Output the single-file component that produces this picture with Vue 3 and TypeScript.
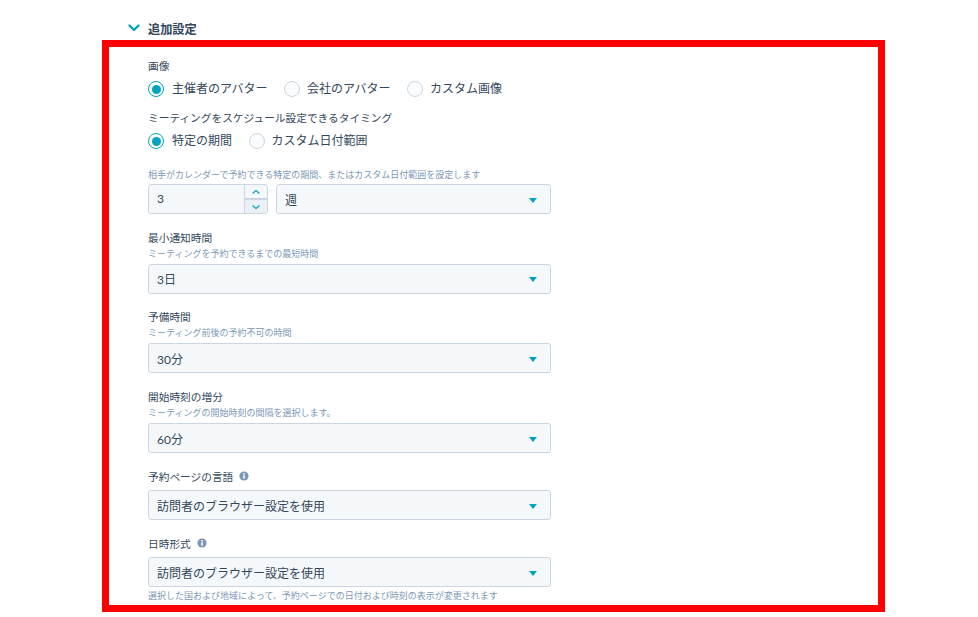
<script setup lang="ts">
interface Field {
  label: string
  hint?: string
  value: string
  info?: boolean
  after?: string
}

const avatarOptions = ['主催者のアバター', '会社のアバター', 'カスタム画像']
const timingOptions = ['特定の期間', 'カスタム日付範囲']

const fields: Field[] = [
  { label: '最小通知時間', hint: 'ミーティングを予約できるまでの最短時間', value: '3日' },
  { label: '予備時間', hint: 'ミーティング前後の予約不可の時間', value: '30分' },
  { label: '開始時刻の増分', hint: 'ミーティングの開始時刻の間隔を選択します。', value: '60分' },
  { label: '予約ページの言語', value: '訪問者のブラウザー設定を使用', info: true },
  {
    label: '日時形式',
    value: '訪問者のブラウザー設定を使用',
    info: true,
    after: '選択した国および地域によって、予約ページでの日付および時刻の表示が変更されます'
  }
]
</script>

<template>
  <main class="page">
    <header class="section-head">
      <svg class="chevron" width="12" height="8" viewBox="0 0 12 8" aria-hidden="true">
        <path d="M1.5 1.5 6 5.8l4.5-4.3" fill="none" stroke="#00a4bd" stroke-width="2.4" stroke-linecap="round" stroke-linejoin="round" />
      </svg>
      <h2>追加設定</h2>
    </header>

    <section class="frame">
      <div class="label first">画像</div>
      <div class="radios">
        <label v-for="(o, i) in avatarOptions" :key="o" class="radio">
          <span class="dot" :class="{ on: i === 0 }"></span>{{ o }}
        </label>
      </div>

      <div class="label second">ミーティングをスケジュール設定できるタイミング</div>
      <div class="radios">
        <label v-for="(o, i) in timingOptions" :key="o" class="radio">
          <span class="dot" :class="{ on: i === 0 }"></span>{{ o }}
        </label>
      </div>

      <div class="hint range-hint">相手がカレンダーで予約できる特定の期間、またはカスタム日付範囲を設定します</div>
      <div class="range">
        <div class="stepper">
          <span class="num">3</span>
          <div class="steps">
            <span class="step">
              <svg width="10" height="6" viewBox="0 0 10 6" aria-hidden="true"><path d="M1.5 4.5 5 1.5l3.5 3" fill="none" stroke="#00a4bd" stroke-width="1.2" /></svg>
            </span>
            <span class="step">
              <svg width="10" height="6" viewBox="0 0 10 6" aria-hidden="true"><path d="M1.5 1.5 5 4.5l3.5-3" fill="none" stroke="#00a4bd" stroke-width="1.2" /></svg>
            </span>
          </div>
        </div>
        <div class="select grow">
          <span>週</span><i class="caret"></i>
        </div>
      </div>

      <div v-for="f in fields" :key="f.label" class="field" :class="{ compact: f.info }">
        <div class="label row">
          {{ f.label }}
          <svg v-if="f.info" class="info" width="10" height="10" viewBox="0 0 10 10" aria-hidden="true">
            <circle cx="5" cy="5" r="4.6" fill="#7c98b6" />
            <rect x="4.2" y="4.2" width="1.6" height="3.4" fill="#fff" />
            <rect x="4.2" y="2.1" width="1.6" height="1.4" fill="#fff" />
          </svg>
        </div>
        <div v-if="f.hint" class="hint">{{ f.hint }}</div>
        <div class="select">
          <span>{{ f.value }}</span><i class="caret"></i>
        </div>
        <div v-if="f.after" class="hint after">{{ f.after }}</div>
      </div>
    </section>
  </main>
</template>

<style scoped>
.page {
  width: 978px;
  height: 617px;
  overflow: hidden;
  background: #fff;
  color: #33475b;
  font-family: Lato, "Noto Sans CJK JP", sans-serif;
  font-size: 12px;
  box-sizing: border-box;
  padding-top: 21px;
}
.section-head {
  display: flex;
  align-items: center;
  height: 18px;
  padding-left: 128px;
  margin-bottom: 1px;
}
.chevron {
  width: 12px;
  height: 8px;
  margin-right: 8px;
  margin-top: -5px;
}
h2 {
  margin: 0;
  font-size: 12.2px;
  font-weight: 700;
  line-height: 18px;
}
.frame {
  box-sizing: border-box;
  width: 783px;
  height: 572px;
  margin-left: 102px;
  border: 7px solid #ff0000;
  padding: 0 0 0 39px;
  overflow: hidden;
}
.label {
  font-size: 10.7px;
  line-height: 16px;
  color: #33475b;
}
.label.first {
  margin-top: 11px;
}
.label.second {
  margin-top: 12px;
}
.label.row {
  display: flex;
  align-items: center;
}
.radios {
  display: flex;
  gap: 16.5px;
  margin-top: 6px;
  height: 18px;
}
.radio {
  display: flex;
  align-items: center;
  font-size: 12px;
  line-height: 18px;
}
.dot {
  box-sizing: border-box;
  width: 16px;
  height: 16px;
  border-radius: 50%;
  border: 1px solid #cbd6e2;
  background: #fbfcfd;
  margin-right: 7px;
  position: relative;
}
.dot.on {
  border: 1.5px solid #00a4bd;
  background: #fff;
  margin-right: 8px;
}
.dot.on::after {
  content: "";
  position: absolute;
  inset: 2.5px;
  border-radius: 50%;
  background: #00a4bd;
}
.hint {
  font-size: 9px;
  line-height: 12px;
  color: #7c98b6;
}
.range-hint {
  margin-top: 19px;
  margin-bottom: 3px;
}
.range {
  display: flex;
  gap: 8px;
  width: 403px;
}
.stepper {
  box-sizing: border-box;
  width: 120px;
  height: 30px;
  display: flex;
  border: 1px solid #cbd6e2;
  border-radius: 3px;
  background: #f5f8fa;
  overflow: hidden;
}
.num {
  flex: 1;
  padding-left: 8px;
  line-height: 28px;
  font-size: 12px;
}
.steps {
  width: 22px;
  display: flex;
  flex-direction: column;
  gap: 2px;
  background: #cbd6e2;
  border-left: 1px solid #cbd6e2;
}
.step {
  flex: 1;
  background: #eaf0f6;
  display: flex;
  align-items: center;
  justify-content: center;
}
.step:first-child {
  background: #f5f8fa;
}
.select {
  box-sizing: border-box;
  width: 403px;
  height: 30px;
  display: flex;
  align-items: center;
  justify-content: space-between;
  padding: 0 13px 0 8px;
  border: 1px solid #cbd6e2;
  border-radius: 3px;
  background: #f5f8fa;
  font-size: 12px;
}
.select.grow {
  flex: 1;
  width: auto;
}
.caret {
  width: 0;
  height: 0;
  margin-top: 2px;
  border-left: 4.5px solid transparent;
  border-right: 4.5px solid transparent;
  border-top: 5px solid #00a4bd;
}
.field {
  margin-top: 15.7px;
}
.field.compact {
  margin-top: 16.2px;
}
.field .hint {
  margin-top: 2px;
  margin-bottom: 4px;
}
.field.compact .select {
  margin-top: 5px;
}
.field .hint.after {
  margin: 3px 0 0;
}
.info {
  margin-left: 6px;
  margin-top: -2px;
}
</style>
